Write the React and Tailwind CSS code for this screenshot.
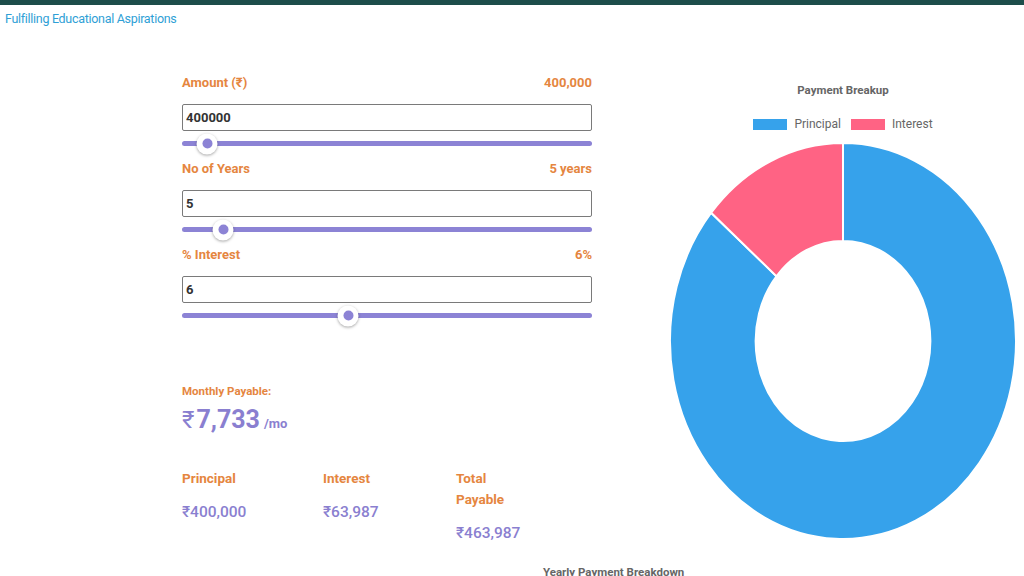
const groups = [
  { label: "Amount (₹)", value: "400,000", input: "400000", pct: 6.1 },
  { label: "No of Years", value: "5 years", input: "5", pct: 10 },
  { label: "% Interest", value: "6%", input: "6", pct: 40.5 },
];

const Slider = ({ pct }) => (
  <div className="relative mt-[10px] h-[5px] rounded-full bg-[#8c83d5]">
    <div
      className="absolute top-1/2 flex h-[21px] w-[21px] -translate-x-1/2 -translate-y-1/2 items-center justify-center rounded-full bg-white shadow-[0_1px_3px_rgba(0,0,0,0.35)]"
      style={{ left: `${pct}%` }}
    >
      <div className="h-[10px] w-[10px] rounded-full bg-[#8c83d5]" />
    </div>
  </div>
);

const Donut = () => (
  <svg width="346" height="396" viewBox="-100 -100 200 200" preserveAspectRatio="none">
    <path
      d="M 0 -100 A 100 100 0 1 1 -76.2 -64.76 L -38.48 -32.7 A 50.5 50.5 0 1 0 0 -50.5 Z"
      fill="#36a2eb"
      stroke="#fff"
      strokeWidth="2"
      vectorEffect="non-scaling-stroke"
    />
    <path
      d="M 0 -100 A 100 100 0 0 0 -76.2 -64.76 L -38.48 -32.7 A 50.5 50.5 0 0 1 0 -50.5 Z"
      fill="#ff6384"
      stroke="#fff"
      strokeWidth="2"
      vectorEffect="non-scaling-stroke"
    />
  </svg>
);

export default function App() {
  return (
    <div className="min-h-screen overflow-hidden bg-white font-['Roboto','Liberation_Sans',sans-serif]">
      <div className="h-[5px] bg-[#1d4d4a]" />
      <div className="pl-[5px] pt-[6px] text-[12.5px] leading-[16px] tracking-[-0.3px] text-[#2f9fd6]">
        Fulfilling Educational Aspirations
      </div>

      <div className="flex pl-[182px]">
        <div className="w-[410px] pt-[46px]">
          {groups.map((g, i) => (
            <div key={i} className={i ? "mt-[13px]" : ""}>
              <div className="flex h-[20px] items-center justify-between text-[13px] font-bold text-[#e5863f]">
                <span>{g.label}</span>
                <span>{g.value}</span>
              </div>
              <input
                readOnly
                value={g.input}
                className="mt-[11px] block h-[27px] w-full rounded-[2px] border border-[#7a7a7a] px-[3px] text-[13px] font-bold text-[#333] outline-none"
              />
              <Slider pct={g.pct} />
            </div>
          ))}

          <div className="mt-[65px] text-[11.5px] leading-[16px] font-bold text-[#e5863f]">
            Monthly Payable:
          </div>
          <div className="mt-[2px] flex h-[32px] items-baseline text-[#8a7fd0]">
            <span className="text-[24px]">₹</span>
            <span className="ml-[2px] text-[25px] font-bold">7,733</span>
            <span className="ml-[4px] text-[13px] font-bold">/mo</span>
          </div>

          <div className="mt-[35px] flex text-[13.5px] leading-[21px]">
            {[
              ["Principal", "₹400,000", "w-[141px]"],
              ["Interest", "₹63,987", "w-[133px]"],
              ["Total Payable", "₹463,987", "w-[60px]"],
            ].map(([l, v, w]) => (
              <div key={l} className={w}>
                <div className="font-bold text-[#e5863f]">{l}</div>
                <div className="mt-[13px] text-[15.5px] font-medium text-[#8a7fd0]">{v}</div>
              </div>
            ))}
          </div>
          <div className="mt-[20px] pl-[361px] text-[11.5px] font-bold whitespace-nowrap text-[#666]">
            Yearly Payment Breakdown
          </div>
        </div>

        <div className="ml-[78px] flex w-[346px] flex-col items-center pt-[55px]">
          <div className="text-[11.5px] leading-[16px] font-bold text-[#666]">Payment Breakup</div>
          <div className="mt-[19px] flex h-[14px] items-center gap-[7px] text-[12px] text-[#666]">
            <span className="h-[11px] w-[34px] bg-[#36a2eb]" />
            <span>Principal</span>
            <span className="ml-[3px] h-[11px] w-[34px] bg-[#ff6384]" />
            <span>Interest</span>
          </div>
          <div className="mt-[12px]">
            <Donut />
          </div>
        </div>
      </div>
    </div>
  );
}
